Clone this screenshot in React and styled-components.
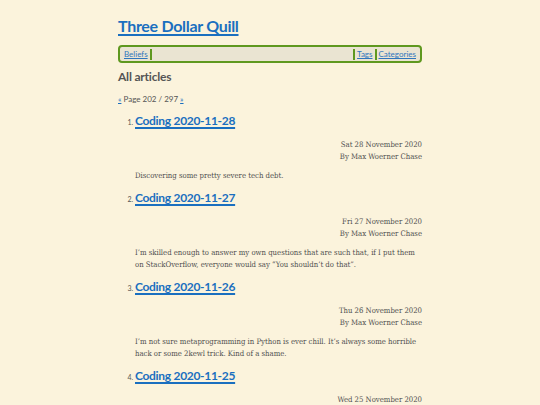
import React from "react";
import styled, { createGlobalStyle } from "styled-components";

const GlobalStyle = createGlobalStyle`
  html, body {
    margin: 0;
    padding: 0;
    background: #fbf3dc;
  }
  body {
    font-family: 'DejaVu Serif Condensed', 'DejaVu Serif', serif;
    color: #555555;
  }
`

const Page = styled.div`
  width: 304px;
  margin: 0 auto;
  padding-top: 15px;
`

const SiteTitle = styled.h1`
  font-family: 'Lato', sans-serif;
  font-weight: 700;
  font-size: 16px;
  letter-spacing: -0.3px;
  line-height: 22px;
  margin: 0 0 8px;

  a {
    color: #1a6fbf;
    text-decoration: underline;
    text-decoration-thickness: 2px;
    text-underline-offset: 2px;
  }
`

const Nav = styled.nav`
  display: flex;
  align-items: center;
  height: 12px;
  padding: 1px 2px;
  border: 2px solid #5f981f;
  border-radius: 4px;
  background: #eae4d2;
  font-family: 'Lato', sans-serif;
  font-size: 8px;
`

const NavLink = styled.a`
  color: #2f76bd;
  text-decoration: underline;
  padding: 0 2px;
`

const NavSep = styled.span`
  width: 2px;
  height: 11px;
  background: #5f981f;
`

const NavSpacer = styled.div`
  flex: 1;
`

const Heading = styled.h2`
  font-family: 'Lato', sans-serif;
  font-weight: 700;
  font-size: 12px;
  letter-spacing: -0.2px;
  line-height: 16px;
  color: #555555;
  margin: 6px 0 8px;
`

const Pager = styled.div`
  font-family: 'Lato', sans-serif;
  font-size: 8px;
  line-height: 12px;
  color: #555555;
  margin-bottom: 4px;

  a {
    color: #1a6fbf;
  }
`

const List = styled.ol`
  margin: 0;
  padding-left: 17px;
  font-family: 'Lato', sans-serif;
`

const Item = styled.li`
  font-size: 7px;
  color: #555555;
  margin-bottom: 4px;
`

const ArticleTitle = styled.a`
  font-family: 'Lato', sans-serif;
  font-weight: 700;
  font-size: 12px;
  letter-spacing: -0.3px;
  line-height: 24px;
  color: #1a6fbf;
  text-decoration: underline;
  text-decoration-thickness: 1.5px;
  text-underline-offset: 2px;
`

const Meta = styled.div`
  margin-top: 6px;
  text-align: right;
  font-family: 'DejaVu Serif Condensed', 'DejaVu Serif', serif;
  font-size: 7.7px;
  line-height: 12px;
  color: #505050;
`

const Summary = styled.p`
  font-family: 'DejaVu Serif Condensed', 'DejaVu Serif', serif;
  font-size: 7.7px;
  line-height: 12px;
  color: #505050;
  margin: 7px 0 0;
`

const articles = [
  {
    title: "Coding 2020-11-28",
    date: "Sat 28 November 2020",
    summary: "Discovering some pretty severe tech debt.",
  },
  {
    title: "Coding 2020-11-27",
    date: "Fri 27 November 2020",
    summary:
      "I\u2019m skilled enough to answer my own questions that are such that, if I put them on StackOverflow, everyone would say \u201cYou shouldn\u2019t do that\u201d.",
  },
  {
    title: "Coding 2020-11-26",
    date: "Thu 26 November 2020",
    summary:
      "I\u2019m not sure metaprogramming in Python is ever chill. It\u2019s always some horrible hack or some 2kewl trick. Kind of a shame.",
  },
  {
    title: "Coding 2020-11-25",
    date: "Wed 25 November 2020",
    summary: "More work on the plugin system.",
  },
];

export default function App() {
  return (
    <Page>
      <GlobalStyle />
      <SiteTitle>
        <a href="#">Three Dollar Quill</a>
      </SiteTitle>
      <Nav>
        <NavLink href="#">Beliefs</NavLink>
        <NavSep />
        <NavSpacer />
        <NavSep />
        <NavLink href="#">Tags</NavLink>
        <NavSep />
        <NavLink href="#">Categories</NavLink>
      </Nav>
      <Heading>All articles</Heading>
      <Pager>
        <a href="#">«</a> Page 202 / 297 <a href="#">»</a>
      </Pager>
      <List>
        {articles.map((a) => (
          <Item key={a.title}>
            <ArticleTitle href="#">{a.title}</ArticleTitle>
            <Meta>
              {a.date}
              <br />
              By Max Woerner Chase
            </Meta>
            <Summary>{a.summary}</Summary>
          </Item>
        ))}
      </List>
    </Page>
  );
}
